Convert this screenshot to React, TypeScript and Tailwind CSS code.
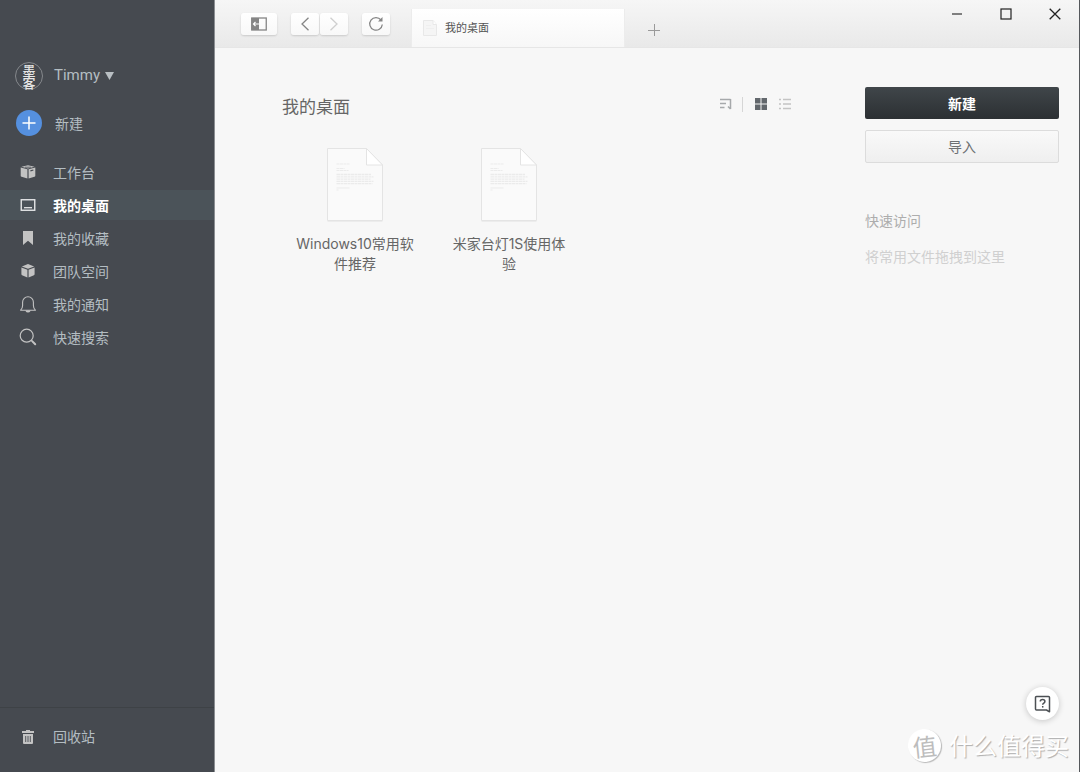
import type { ReactNode } from "react";

function ToolboxIcon() {
    return (
        <svg width="16" height="14" viewBox="0 0 16 14" fill="#c3c3c3">
            <path d="M8 .3l6.500 1.400L8 3.400 1.500 1.700z" />
            <path d="M.7 2.500l6.700 1.700v9.300l-5.800-1.700a1 1 0 0 1-.9-1z" />
            <path d="M15.300 2.500L8.600 4.200v9.300l5.800-1.700a1 1 0 0 0 .9-1z" />
            <path d="M10.400 5.800l3-.8" stroke="#464a50" strokeWidth="1.200" />
            <path d="M5 2.200h6" stroke="#464a50" strokeWidth=".8" />
        </svg>
    )
}

function DesktopIcon() {
    return (
        <svg width="16" height="14" viewBox="0 0 16 14" fill="none" stroke="#e4e6e7">
            <rect x="1.250" y="1.750" width="13.500" height="10.500" strokeWidth="1.400" />
            <path d="M4 9.700h8" strokeWidth="1.300" />
        </svg>
    )
}

function BookmarkIcon() {
    return (
        <svg width="16" height="16" viewBox="0 0 16 16" fill="#c3c3c3">
            <path d="M3 1h10v14l-5-4.200L3 15z" />
        </svg>
    )
}

function CubeIcon() {
    return (
        <svg width="16" height="16" viewBox="0 0 16 16" fill="#c3c3c3">
            <path d="M8 1l6.200 2.400L8 5.800 1.800 3.400z" />
            <path d="M1.400 4.400l6 2.400v7.800l-5.300-2.300a1.100 1.100 0 0 1-.7-1z" />
            <path d="M14.600 4.400l-6 2.400v7.800l5.300-2.300a1.100 1.100 0 0 0 .7-1z" />
        </svg>
    )
}

function BellIcon() {
    return (
        <svg width="18" height="18" viewBox="0 0 18 18" fill="none" stroke="#c3c3c3" strokeWidth="1.100">
            <path d="M1.600 15.200h14.800c-1.700-1.500-2-2.900-2-4.800V7.200a5.400 5.400 0 0 0-10.800 0v3.200c0 1.900-.3 3.300-2 4.800z" strokeLinejoin="round" />
            <path d="M7.200 16a1.900 1.500 0 0 0 3.600 0z" fill="#c3c3c3" />
        </svg>
    )
}

function SearchIcon() {
    return (
        <svg width="18" height="18" viewBox="0 0 18 18" fill="none" stroke="#c3c3c3">
            <circle cx="7.700" cy="7.700" r="6.500" strokeWidth="1.200" />
            <path d="M12.300 12.300l1.500 1.500" strokeWidth="1.200" />
            <path d="M13.400 13.400l2.800 2.800" strokeWidth="2" strokeLinecap="round" />
        </svg>
    )
}

function TrashIcon() {
    return (
        <svg width="14" height="16" viewBox="0 0 14 16" fill="#c3c3c3">
            <path d="M5 1h4v1h4v2H1V2h4z" />
            <path d="M2 5h10v9a1 1 0 0 1-1 1H3a1 1 0 0 1-1-1z" />
            <path d="M4.700 7v6M7 7v6M9.300 7v6" stroke="#55595e" strokeWidth="1" />
        </svg>
    )
}

function DocumentIcon() {
    return (
        <svg width="58" height="76" viewBox="0 0 58 76" fill="none">
            <path d="M1.500 1.500h39l16 16.500v55.500h-55z" fill="#fafafa" stroke="#e4e4e4" />
            <path d="M1.500 74.500h55" stroke="#ececec" />
            <path d="M40.500 1.500v16.500h16z" fill="#fff" stroke="#e4e4e4" />
            <g stroke="#ebebeb">
                <path d="M10.500 17h13M10.500 21.500h8M10.500 23.500h12" strokeDasharray="3 .5" />
                <path d="M10.500 27.500h35M10.500 29.800h37M10.500 32.100h34M10.500 34.400h37M10.500 36.700h36" strokeWidth="1.300" strokeDasharray="4 .5 2 .5" />
                <path d="M10.500 41h13M10.500 43h2" />
            </g>
        </svg>
    )
}

const navItems: { label: string; icon: ReactNode; active?: boolean }[] = [
    { label: "工作台", icon: <ToolboxIcon /> },
    { label: "我的桌面", icon: <DesktopIcon />, active: true },
    { label: "我的收藏", icon: <BookmarkIcon /> },
    { label: "团队空间", icon: <CubeIcon /> },
    { label: "我的通知", icon: <BellIcon /> },
    { label: "快速搜索", icon: <SearchIcon /> },
];

const files = ["Windows10常用软件推荐", "米家台灯1S使用体验"];

const toolButton = "flex h-[22px] items-center justify-center rounded-[3px] bg-linear-to-b from-white to-[#f8f8f8] shadow-[0_1px_2px_rgba(0,0,0,0.15)]";

function Sidebar() {
    return (
        <aside className="flex w-[215px] shrink-0 flex-col border-r border-[#8b8e92] bg-[#464a50] text-sm text-[#b4bdc2]">
            <button className="mt-[61px] ml-[15px] flex h-[30px] items-center text-left">
                <span className="flex w-[28px] justify-center rounded-full border border-[#85888c] font-['Noto_Sans_CJK_SC',sans-serif] text-[13px] leading-[13px] font-medium text-[#e6e6e6]">
                    <span className="w-[13px] break-all">墨客</span>
                </span>
                <span className="ml-[11px] font-[Roboto,sans-serif] text-[15px]">Timmy</span>
                <svg className="ml-[5px]" width="9" height="8" viewBox="0 0 9 8" fill="#b9bfc3">
                    <path d="M0 0h9L4.500 8z" />
                </svg>
            </button>
            <button className="mt-[19px] ml-4 flex h-[26px] items-center text-left">
                <span className="flex size-[26px] items-center justify-center rounded-full bg-[#5590df]">
                    <svg width="14" height="14" viewBox="0 0 14 14" stroke="#fff" strokeWidth="1.500">
                        <path d="M7 .5v13M.5 7h13" />
                    </svg>
                </span>
                <span className="ml-[13px]">新建</span>
            </button>
            <nav className="mt-[21px] flex flex-col gap-[3px]">
                {navItems.map((item) => (
                    <a
                        key={item.label}
                        href="#"
                        className={item.active ? "flex h-[30px] items-center bg-[#4b5359] pl-[19px] font-bold text-white" : "flex h-[30px] items-center pl-[19px]"}
                    >
                        <span className="flex w-[18px] justify-center">{item.icon}</span>
                        <span className="ml-4 pb-px">{item.label}</span>
                    </a>
                ))}
            </nav>
            <a href="#" className="mt-auto flex h-[65px] items-center border-t border-[#3e4246] pb-[7px] pl-[19px]">
                <span className="flex w-[18px] justify-center"><TrashIcon /></span>
                <span className="ml-4 pb-px">回收站</span>
            </a>
        </aside>
    )
}

function TitleBar() {
    return (
        <header className="flex h-12 border-b border-[#e6e6e6] bg-linear-to-b from-[#f6f6f6] to-[#e9e9e9]">
            <div className="mt-[13px] ml-[26px] flex">
                <button aria-label="侧边栏" className={`${toolButton} w-[36px]`}>
                    <svg width="16" height="14" viewBox="0 0 16 14" fill="none">
                        <rect x=".75" y="1" width="14.500" height="12" stroke="#858585" strokeWidth="1.300" />
                        <path d="M.5 1H8v12H.5z" fill="#858585" />
                        <path d="M8 7H2.500M4.500 5l-2 2 2 2" stroke="#fff" strokeWidth="1.200" />
                    </svg>
                </button>
                <button aria-label="后退" className={`${toolButton} ml-[14px] w-[28px]`}>
                    <svg width="10" height="14" viewBox="0 0 10 14" fill="none" stroke="#858585" strokeWidth="1.300">
                        <path d="M8.500.7L2 7l6.500 6.300" />
                    </svg>
                </button>
                <button aria-label="前进" className={`${toolButton} ml-px w-[28px]`}>
                    <svg width="10" height="14" viewBox="0 0 10 14" fill="none" stroke="#cfcfcf" strokeWidth="1.300">
                        <path d="M1.500.7L8 7l-6.500 6.300" />
                    </svg>
                </button>
                <button aria-label="刷新" className={`${toolButton} ml-[14px] w-[28px]`}>
                    <svg width="16" height="16" viewBox="0 0 16 16" fill="none" stroke="#858585" strokeWidth="1.300">
                        <path d="M13 4a6.300 6.300 0 1 0 1.300 4.500" />
                        <path d="M14.500 1v4.500H10z" fill="#858585" stroke="none" />
                    </svg>
                </button>
            </div>
            <div className="mt-[9px] ml-[21px] flex w-[214px] items-center border-x border-[#ececec] bg-linear-to-b from-white to-[#f7f7f7] pl-[11px]">
                <svg width="14" height="18" viewBox="0 0 14 18" fill="none" stroke="#e8e8e8">
                    <path d="M.5 1.500h9.500l3.500 4v11H.5z" fill="#f5f5f5" />
                    <path d="M10 1.500v4h3.500" fill="#fff" />
                    <path d="M3 6.500h5M3 9.500h8" stroke="#efefef" />
                </svg>
                <span className="ml-2 pb-px text-[11px] text-[#555]">我的桌面</span>
            </div>
            <button aria-label="新标签页" className="mt-[24px] ml-[23px] size-[12px]">
                <svg width="12" height="12" viewBox="0 0 12 12" stroke="#9a9a9a">
                    <path d="M6.500 0v12M0 6.500h12" />
                </svg>
            </button>
            <div className="mr-[18px] mt-2 ml-auto flex gap-[37px]">
                <button aria-label="最小化" className="size-[12px]">
                    <svg width="12" height="12" viewBox="0 0 12 12" stroke="#333" strokeWidth="1.200">
                        <path d="M1 6h10" />
                    </svg>
                </button>
                <button aria-label="最大化" className="size-[12px]">
                    <svg width="12" height="12" viewBox="0 0 12 12" fill="none" stroke="#222" strokeWidth="1.200">
                        <rect x="1" y="1" width="10" height="10" />
                    </svg>
                </button>
                <button aria-label="关闭" className="size-[12px]">
                    <svg width="12" height="12" viewBox="0 0 12 12" stroke="#222" strokeWidth="1.300">
                        <path d="M.7.7l10.600 10.600M11.300.7L.7 11.300" />
                    </svg>
                </button>
            </div>
        </header>
    )
}

export default function App() {
    return (
        <div className="relative flex min-h-screen border-r border-[#55585c] bg-[#f7f7f7] font-['Noto_Sans_CJK_SC',sans-serif]">
            <Sidebar />
            <div className="flex min-w-0 flex-1 flex-col">
                <TitleBar />
                <div className="flex flex-1">
                    <main className="flex-1 pt-[46px] pr-[74px] pl-[67px]">
                        <div className="flex items-start justify-between">
                            <h1 className="text-[17px] leading-6 text-[#666]">我的桌面</h1>
                            <div className="flex h-5 items-center">
                                <button aria-label="排序">
                                    <svg width="14" height="12" viewBox="0 0 14 12" fill="none" stroke="#a6a9ab" strokeWidth="1.500">
                                        <path d="M1 1.500h10.500M1 5.500h6M1 9.500h4.500" />
                                        <path d="M11.500 1v10M9 8.500l2.500 2.500" />
                                    </svg>
                                </button>
                                <span className="mr-[12px] ml-[9px] h-[15px] w-px bg-[#d6d6d6]" />
                                <button aria-label="网格视图">
                                    <svg width="12" height="12" viewBox="0 0 12 12" fill="#63686d">
                                        <path d="M0 0h5.500v5.500H0zM6.500 0H12v5.500H6.500zM0 6.500h5.500V12H0zM6.500 6.500H12V12H6.500z" />
                                    </svg>
                                </button>
                                <button aria-label="列表视图" className="ml-[12px]">
                                    <svg width="12" height="12" viewBox="0 0 12 12" stroke="#c4c4c4" strokeWidth="1.500">
                                        <path d="M0 1.500h2M4 1.500h8M0 6h2M4 6h8M0 10.500h2M4 10.500h8" />
                                    </svg>
                                </button>
                            </div>
                        </div>
                        <div className="mt-[29px] ml-[13px] flex flex-wrap gap-[34px]">
                            {files.map((name) => (
                                <a key={name} href="#" className="flex w-[120px] flex-col items-center text-center">
                                    <DocumentIcon />
                                    <span className="mt-[11px] font-[Inter,'Noto_Sans_CJK_SC',sans-serif] text-sm leading-5 text-[#666]">{name}</span>
                                </a>
                            ))}
                        </div>
                    </main>
                    <aside className="mt-[39px] mr-[20px] w-[194px] text-sm">
                        <button className="h-8 w-full rounded-xs bg-linear-to-b from-[#40464a] to-[#2c3033] font-bold text-white">新建</button>
                        <button className="mt-[11px] h-[33px] w-full rounded-xs border border-[#dcdcdc] bg-linear-to-b from-[#f9f9f9] to-[#efefef] pb-[2px] text-[#6c6f72]">导入</button>
                        <h2 className="mt-[47px] leading-5 text-[#adadad]">快速访问</h2>
                        <p className="mt-4 leading-5 text-[#d0d0d0]">将常用文件拖拽到这里</p>
                    </aside>
                </div>
            </div>
            <button aria-label="帮助" className="absolute right-[20px] bottom-[52px] flex size-[33px] items-center justify-center rounded-full bg-white shadow-[0_1px_6px_rgba(0,0,0,0.2)]">
                <svg width="18" height="18" viewBox="0 0 18 18" fill="none" stroke="#4c5054" strokeWidth="1.500">
                    <path d="M2.500 1.500h12a1 1 0 0 1 1 1v14.300l-3-1.800h-10a1 1 0 0 1-1-1V2.500a1 1 0 0 1 1-1z" strokeLinejoin="round" />
                    <path d="M6.300 6.600c0-2.800 4.600-2.800 4.600 0 0 1.600-2.200 1.500-2.200 3.200" />
                    <path d="M8.700 11v1.600" />
                </svg>
            </button>
            <div className="absolute right-[10px] bottom-[9px] flex items-center gap-2">
                <span className="flex size-[33px] -rotate-6 items-center justify-center rounded-full bg-white text-[24px] leading-none text-[#bdbdbd] shadow-[1px_1px_1px_rgba(0,0,0,0.25)]">值</span>
                <span className="text-[24px] leading-9 text-white [text-shadow:1px_1px_1px_rgba(0,0,0,0.3)]">什么值得买</span>
            </div>
        </div>
    )
}
